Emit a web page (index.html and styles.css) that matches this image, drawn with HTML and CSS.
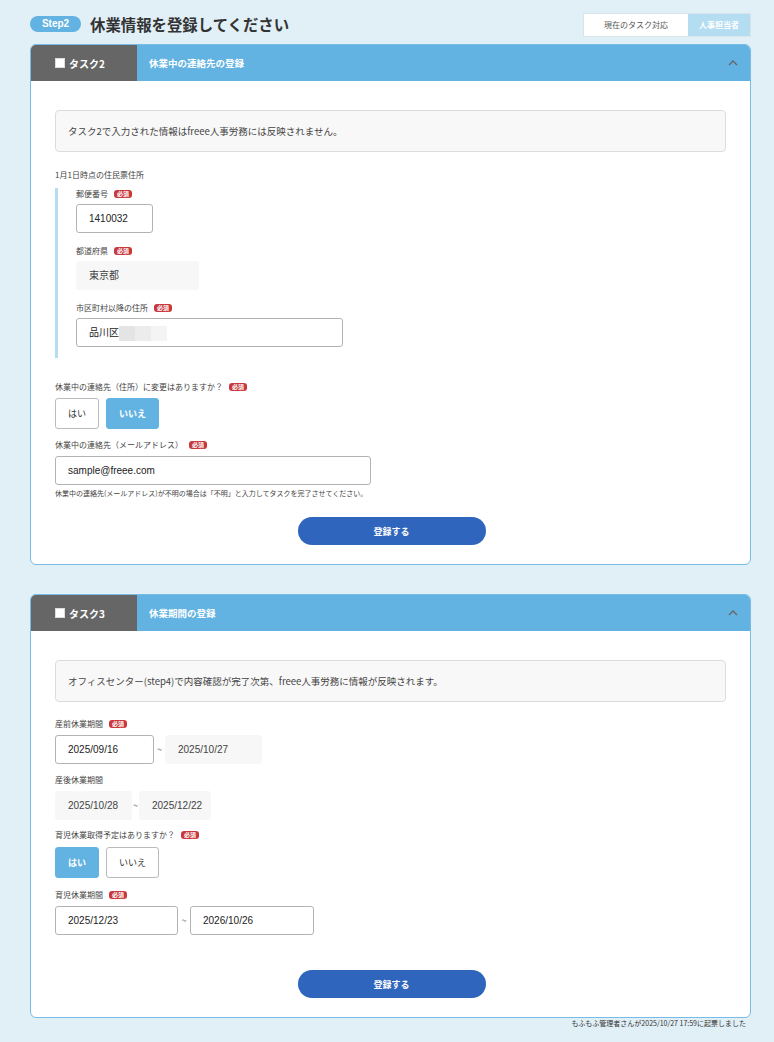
FILE: index.html
```html
<!DOCTYPE html>
<html lang="ja">
<head>
<meta charset="utf-8">
<title>休業情報を登録してください</title>
<link rel="stylesheet" href="styles.css">
</head>
<body>
<div class="page">
  <header class="top">
    <div class="top-left">
      <span class="step">Step2</span>
      <h1 class="title">休業情報を登録してください</h1>
    </div>
    <div class="owner">
      <span class="owner-label">現在のタスク対応</span>
      <span class="owner-role">人事担当者</span>
    </div>
  </header>

  <section class="card">
    <div class="card-head">
      <div class="tab"><span class="check"></span>タスク2</div>
      <div class="head-title">休業中の連絡先の登録</div>
      <svg class="chev" width="10" height="6" viewBox="0 0 10 6"><polyline points="1,5 5,1 9,5" fill="none" stroke="#666" stroke-width="1.3"/></svg>
    </div>
    <div class="card-body">
      <div class="note">タスク2で入力された情報はfreee人事労務には反映されません。</div>
      <div class="label m17">1月1日時点の住民票住所</div>
      <div class="group">
        <div class="label">郵便番号<span class="req">必須</span></div>
        <div class="input w77 m4">1410032</div>
        <div class="label m12">都道府県<span class="req">必須</span></div>
        <div class="ro w123 m4">東京都</div>
        <div class="label m12">市区町村以降の住所<span class="req">必須</span></div>
        <div class="input w267 m4">品川区<span class="blur"><i></i><i></i><i></i></span></div>
      </div>
      <div class="label m23">休業中の連絡先（住所）に変更はありますか？ <span class="req">必須</span></div>
      <div class="choices m5">
        <span class="choice">はい</span>
        <span class="choice on">いいえ</span>
      </div>
      <div class="label m10">休業中の連絡先（メールアドレス） <span class="req">必須</span></div>
      <div class="input w316 m5">sample@freee.com</div>
      <div class="help">休業中の連絡先(メールアドレス)が不明の場合は「不明」と入力してタスクを完了させてください。</div>
      <div class="submit-row"><button class="submit">登録する</button></div>
    </div>
  </section>

  <section class="card second">
    <div class="card-head">
      <div class="tab"><span class="check"></span>タスク3</div>
      <div class="head-title">休業期間の登録</div>
      <svg class="chev" width="10" height="6" viewBox="0 0 10 6"><polyline points="1,5 5,1 9,5" fill="none" stroke="#666" stroke-width="1.3"/></svg>
    </div>
    <div class="card-body">
      <div class="note">オフィスセンター(step4)で内容確認が完了次第、freee人事労務に情報が反映されます。</div>
      <div class="label m16">産前休業期間<span class="req">必須</span></div>
      <div class="range m5">
        <div class="input w99">2025/09/16</div>
        <span class="tilde">~</span>
        <div class="ro w97">2025/10/27</div>
      </div>
      <div class="label m10">産後休業期間</div>
      <div class="range m5">
        <div class="ro w77">2025/10/28</div>
        <span class="tilde narrow">~</span>
        <div class="ro w72">2025/12/22</div>
      </div>
      <div class="label m9">育児休業取得予定はありますか？ <span class="req">必須</span></div>
      <div class="choices m6">
        <span class="choice on">はい</span>
        <span class="choice">いいえ</span>
      </div>
      <div class="label m11">育児休業期間<span class="req">必須</span></div>
      <div class="range m5">
        <div class="input w123">2025/12/23</div>
        <span class="tilde wide">~</span>
        <div class="input w124">2026/10/26</div>
      </div>
      <div class="submit-row far"><button class="submit">登録する</button></div>
    </div>
  </section>

  <p class="foot">もふもふ管理者さんが2025/10/27 17:59に起票しました</p>
</div>
</body>
</html>
```

FILE: styles.css
```css
* { box-sizing: border-box; }

body {
  margin: 0;
  background: #e1eff7;
  font-family: "Noto Sans CJK JP", "Liberation Sans", sans-serif;
  color: #333;
}

.page {
  width: 721px;
  margin-left: 30px;
}

/* page header */
.top {
  height: 44px;
  display: flex;
  justify-content: space-between;
  align-items: flex-start;
}
.top-left {
  display: flex;
  align-items: center;
  margin-top: 14px;
}
.step {
  width: 51px;
  height: 16px;
  border-radius: 8px;
  background: #62b2e2;
  color: #fff;
  font-size: 10px;
  font-weight: bold;
  line-height: 16px;
  text-align: center;
  font-family: "Liberation Sans", sans-serif;
}
.title {
  margin: 0 0 0 9px;
  font-size: 15.4px;
  font-weight: bold;
  line-height: 20px;
  color: #333;
}
.owner {
  margin-top: 13px;
  display: flex;
  height: 24px;
  border: 1px solid #d6e4ec;
  background: #fff;
  font-size: 8px;
  line-height: 22px;
}
.owner-label {
  width: 104px;
  text-align: center;
  color: #555;
}
.owner-role {
  width: 62px;
  text-align: center;
  background: #b4ddf1;
  color: #fff;
  font-weight: bold;
}

/* task card */
.card {
  background: #fff;
  border: 1px solid #78bbe5;
  border-radius: 6px;
  overflow: hidden;
}
.card.second { margin-top: 29px; }

.card-head {
  height: 36px;
  display: flex;
  align-items: center;
  background: #62b3e2;
}
.tab {
  width: 106px;
  height: 100%;
  background: #666;
  color: #fff;
  font-size: 10px;
  font-weight: bold;
  display: flex;
  align-items: center;
  padding-left: 24px;
}
.check {
  width: 10px;
  height: 10px;
  background: #fff;
  border: 1px solid #ddd;
  margin-right: 4px;
}
.head-title {
  margin-left: 12px;
  color: #fff;
  font-size: 9.5px;
  font-weight: bold;
}
.chev {
  margin-left: auto;
  margin-right: 12px;
}

.card-body {
  padding: 29px 24px 19px 24px;
  display: flex;
  flex-direction: column;
  align-items: flex-start;
}

.note {
  width: 100%;
  height: 42px;
  background: #f8f8f8;
  border: 1px solid #dcdcdc;
  border-radius: 4px;
  padding-left: 12px;
  font-size: 9.5px;
  line-height: 40px;
  color: #444;
}

.label {
  font-size: 8px;
  line-height: 12px;
  color: #444;
  display: flex;
  align-items: center;
}
.req {
  display: inline-block;
  margin-left: 6px;
  background: #c8383b;
  color: #fff;
  font-size: 6px;
  line-height: 8px;
  padding: 0 3px;
  border-radius: 3px;
  font-weight: bold;
}

.m4 { margin-top: 4px; }
.m5 { margin-top: 5px; }
.m6 { margin-top: 6px; }
.m9 { margin-top: 9px; }
.m10 { margin-top: 10px; }
.m11 { margin-top: 11px; }
.m12 { margin-top: 12px; }
.m16 { margin-top: 16px; }
.m17 { margin-top: 17px; }
.m23 { margin-top: 23px; }

/* address block with its left rule */
.group {
  margin-top: 7px;
  border-left: 3px solid #b4ddf1;
  padding: 0 0 11px 18px;
  display: flex;
  flex-direction: column;
  align-items: flex-start;
}

.input, .ro {
  height: 29px;
  border-radius: 3px;
  font-size: 10px;
  line-height: 27px;
  padding-left: 12px;
  font-family: "Liberation Sans", "Noto Sans CJK JP", sans-serif;
  white-space: nowrap;
}
.input {
  border: 1px solid #b3b3b3;
  background: #fff;
  color: #222;
}
.ro {
  border: 1px solid #f7f7f7;
  background: #f7f7f7;
  color: #444;
}
.w72 { width: 72px; }
.w77 { width: 77px; }
.w97 { width: 97px; }
.w99 { width: 99px; }
.w123 { width: 123px; }
.w124 { width: 124px; }
.w267 { width: 267px; }
.w316 { width: 316px; }

.blur {
  display: inline-flex;
  vertical-align: middle;
  height: 15px;
}
.blur i {
  width: 16px;
  height: 15px;
  background: #e4e4e4;
}
.blur i:nth-child(2) { background: #ececec; }
.blur i:nth-child(3) { background: #f4f4f4; }

.choices {
  display: flex;
  gap: 7px;
}
.choice {
  height: 31px;
  padding: 0 12px;
  border: 1px solid #bbb;
  border-radius: 3px;
  background: #fff;
  font-size: 9px;
  line-height: 29px;
  color: #333;
}
.choice.on {
  background: #62b3e2;
  border-color: #62b3e2;
  color: #fff;
  font-weight: bold;
}

.help {
  margin-top: 3px;
  font-size: 7px;
  line-height: 10px;
  color: #444;
}

.range {
  display: flex;
  align-items: center;
}
.tilde {
  width: 11px;
  text-align: center;
  font-size: 9px;
  color: #555;
}
.tilde.narrow { width: 7px; }
.tilde.wide { width: 12px; }

.submit-row {
  width: 100%;
  display: flex;
  justify-content: center;
  margin-top: 19px;
}
.submit-row.far { margin-top: 35px; }
.submit {
  width: 188px;
  height: 28px;
  border: none;
  border-radius: 14px;
  background: #2f65bc;
  color: #fff;
  font-family: "Noto Sans CJK JP", sans-serif;
  font-size: 9px;
  font-weight: bold;
  margin-left: 2px;
}

.foot {
  margin: 0;
  text-align: right;
  padding-right: 5px;
  font-size: 7px;
  line-height: 10px;
  color: #333;
}
```
